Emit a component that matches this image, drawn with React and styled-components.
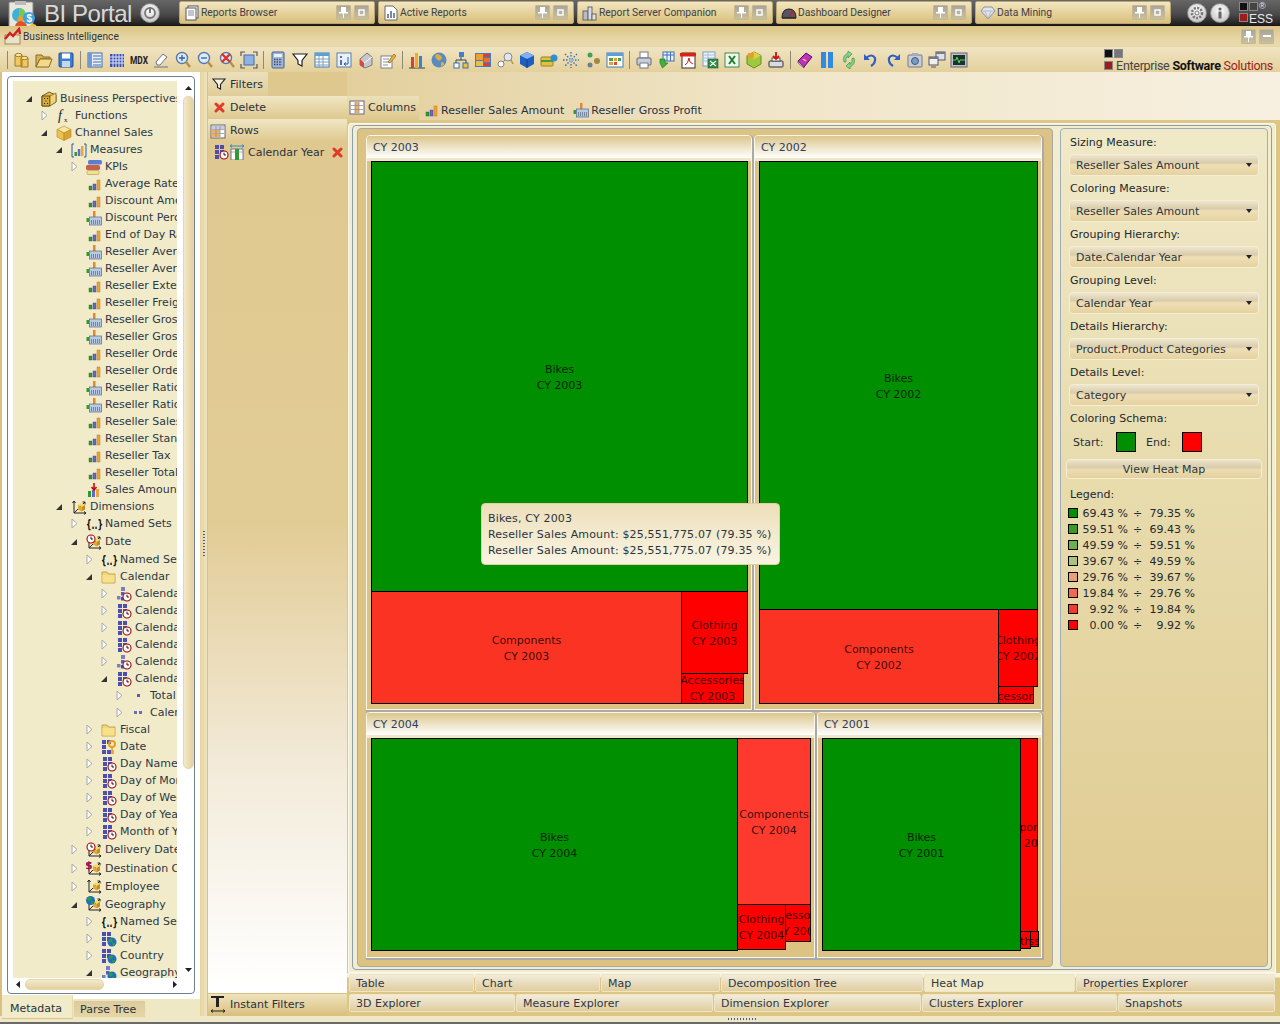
import React from "react";
import styled, { createGlobalStyle } from "styled-components";

const Global = createGlobalStyle`
  html, body { margin: 0; padding: 0; background: #3a3a3a; }
  * { box-sizing: border-box; }
`;

const UI = `"DejaVu Sans", Verdana, sans-serif`;
const NARROW = `Roboto, "Liberation Sans", sans-serif`;

const S = ({ children, w = 16, h = 16 }) => (
  <svg width={w} height={h} viewBox={`0 0 ${w} ${h}`} style={{ display: "block", flex: "none" }}>{children}</svg>
);

const Clock = ({ x = 9, y = 9, r = 4 }) => (
  <g>
    <circle cx={x} cy={y} r={r} fill="#fff" stroke="#a80000" strokeWidth="1.1" />
    <path d={`M${x} ${y - 2.4}V${y}H${x + 2}`} fill="none" stroke="#000" strokeWidth=".9" />
  </g>
);
const Sq = ({ x, y, s = 4, c = "#4a4fb0" }) => <rect x={x} y={y} width={s} height={s} fill={c} />;
const Globe = ({ x = 11, y = 11, r = 4.5 }) => (
  <g>
    <circle cx={x} cy={y} r={r} fill="#1f6fc0" />
    <path d={`M${x - 3} ${y - 3}q3 -1 4 1q-1 3 -4 2zM${x} ${y + 1}q3 -1 3 2l-2 1z`} fill="#2f9e2f" />
  </g>
);
const Axes = () => <path d="M3 2V14H15M3 2l-1.6 2M3 2l1.6 2M15 14l-2-1.5M15 14l-2 1.5M3 14L14 3M14 3h-2.5M14 3v2.5" fill="none" stroke="#222" strokeWidth="1" />;
const MiniCube = ({ x = 7, y = 4 }) => (
  <g transform={`translate(${x} ${y})`}>
    <path d="M0 2L3.5 0L7 2L3.5 4z" fill="#f6d868" />
    <path d="M0 2L3.5 4V8.5L0 6.5z" fill="#e5a92a" />
    <path d="M7 2L3.5 4V8.5L7 6.5z" fill="#c98c1a" />
  </g>
);
const Bars = () => (
  <g>
    <rect x="3" y="10" width="3" height="4" fill="#2f9a2f" stroke="#1d6b1d" strokeWidth=".4" />
    <rect x="7" y="8" width="3" height="6" fill="#6668c4" stroke="#3c3e90" strokeWidth=".4" />
    <rect x="11" y="4" width="3" height="10" fill="#eda63a" stroke="#b06c10" strokeWidth=".4" />
  </g>
);

const treeIcons = {
  cubeDots: (
    <S>
      <path d="M1 5L8 1L15 4V11L8 15H1z" fill="#e5bb52" stroke="#5b4410" strokeWidth=".8" />
      <path d="M1 5H9V15H1z" fill="#d9a93a" stroke="#4b3a10" strokeWidth=".8" />
      <path d="M9 5L15 2V11L9 15z" fill="#f1d37a" stroke="#5b4410" strokeWidth=".6" />
      <path d="M3 7h1v1H3zM6 7h1v1H6zM3 12h1v1H3zM6 12h1v1H6zM4.5 9.5h1v1h-1z" fill="#222" />
    </S>
  ),
  fx: (
    <S>
      <text x="2" y="12" fontFamily="Liberation Serif, serif" fontStyle="italic" fontSize="14" fill="#222">f</text>
      <text x="8" y="14" fontFamily="Liberation Serif, serif" fontSize="7" fill="#222">x</text>
    </S>
  ),
  cube: (
    <S>
      <path d="M1 4.5L8 1L15 4.5L8 8z" fill="#f8e69a" stroke="#b08a2a" strokeWidth=".6" />
      <path d="M1 4.5L8 8V15.5L1 12z" fill="#edc14d" stroke="#b08a2a" strokeWidth=".6" />
      <path d="M15 4.5L8 8V15.5L15 12z" fill="#d9a52e" stroke="#b08a2a" strokeWidth=".6" />
    </S>
  ),
  measures: (
    <S>
      <path d="M3 2H1V15H3M13 2h2V15H13" fill="none" stroke="#1f5fa8" strokeWidth="1" />
      <rect x="3.5" y="10" width="2.5" height="4" fill="#2f9a2f" />
      <rect x="6.8" y="7" width="2.5" height="7" fill="#6668c4" />
      <rect x="10" y="4" width="2.5" height="10" fill="#eda63a" />
    </S>
  ),
  kpi: (
    <S>
      <rect x="2" y="1" width="14" height="4.5" rx="1.5" fill="#5a7fd0" />
      <rect x="0" y="6" width="14" height="5" rx="1.5" fill="#c8604e" />
      <rect x="1" y="11.5" width="12" height="4" rx="1" fill="#f0e090" stroke="#b09a40" strokeWidth=".6" />
    </S>
  ),
  bars: <S><Bars /></S>,
  calc: (
    <S>
      <rect x="0.5" y="8" width="2.5" height="4" fill="#2f9a2f" />
      <rect x="7" y="1" width="2.5" height="7" fill="#e08a30" />
      <rect x="3.5" y="7" width="12" height="8" fill="#b9c9e2" stroke="#4f6a94" strokeWidth=".7" />
      <path d="M5 11h9M5 13h9" stroke="#33405a" strokeWidth="1" strokeDasharray="1 1" />
    </S>
  ),
  dims: <S><Axes /><MiniCube /></S>,
  braces: <S w={17}><text x="0" y="13" fontFamily="DejaVu Sans, sans-serif" fontWeight="700" fontSize="13" fill="#111" textLength="17" lengthAdjust="spacingAndGlyphs">{"{..}"}</text></S>,
  clockDim: <S><Axes /><MiniCube /><Clock x={5} y={5} /></S>,
  dollarDim: <S><Axes /><MiniCube /><text x="-1" y="9" fontFamily="DejaVu Sans, sans-serif" fontWeight="700" fontSize="11" fill="#a01050">$</text></S>,
  geoDim: <S><Axes /><MiniCube /><Globe x={4.5} y={4.5} /></S>,
  folder: (
    <S>
      <path d="M1 3H6L7.5 5H14V14H1z" fill="#f2d678" stroke="#b8963a" strokeWidth=".8" />
      <path d="M1.5 6H13.5V13.5H1.5z" fill="#f7e08c" />
    </S>
  ),
  hierClock: <S><Sq x={2} y={1} /><Sq x={7} y={1} /><Sq x={2} y={6} /><Sq x={7} y={6} /><Sq x={2} y={11} /><Clock x={11} y={11} /></S>,
  stepClock: <S><Sq x={5} y={1} c="#7a7cc8" /><Sq x={1} y={10} s={3.5} c="#7a7cc8" /><Sq x={5} y={6} s={3.5} c="#5a5cb8" /><Sq x={5} y={11} s={3.5} /><Clock x={11} y={11} /></S>,
  lvl1: <S><Sq x={6} y={6} s={3} c="#5a5cb8" /></S>,
  lvl2: <S><Sq x={3} y={6} s={3} c="#6a6cc0" /><Sq x={8} y={6} s={3} c="#6a6cc0" /></S>,
  keyGrid: (
    <S>
      <Sq x={1} y={1} /><Sq x={6} y={1} /><Sq x={1} y={6} /><Sq x={1} y={11} /><Sq x={6} y={11} />
      <circle cx="11" cy="5" r="3" fill="none" stroke="#e5a020" strokeWidth="2" />
      <path d="M11 8V15M11 12h2M11 14h2" stroke="#e5a020" strokeWidth="1.5" />
    </S>
  ),
  hierGeo: <S><Sq x={1} y={1} /><Sq x={6} y={1} /><Sq x={1} y={6} /><Sq x={6} y={6} /><Sq x={1} y={11} /><Globe /></S>,
  stepGeo: <S><Sq x={5} y={1} c="#7a7cc8" /><Sq x={1} y={10} s={3.5} c="#7a7cc8" /><Sq x={5} y={6} s={3.5} c="#5a5cb8" /><Globe /></S>,
  salesAmt: (
    <S>
      <rect x="2" y="9" width="3" height="6" fill="#2f9a2f" /><rect x="10" y="7" width="3" height="8" fill="#eda63a" /><rect x="6" y="8" width="3" height="7" fill="#6668c4" />
      <path d="M8 1V7M5.5 5L8 8L10.5 5" fill="none" stroke="#c01010" strokeWidth="1.6" />
    </S>
  ),
};

const tree = [
  [0, "o", "cubeDots", "Business Perspectives"], [1, "c", "fx", "Functions"], [1, "o", "cube", "Channel Sales"],
  [2, "o", "measures", "Measures"], [3, "c", "kpi", "KPIs"], [3, "", "bars", "Average Rate"], [3, "", "bars", "Discount Amount"],
  [3, "", "calc", "Discount Percentage"], [3, "", "bars", "End of Day Rate"], [3, "", "calc", "Reseller Average"], [3, "", "calc", "Reseller Average"],
  [3, "", "bars", "Reseller Extended"], [3, "", "bars", "Reseller Freight"], [3, "", "calc", "Reseller Gross"], [3, "", "calc", "Reseller Gross"],
  [3, "", "bars", "Reseller Order"], [3, "", "bars", "Reseller Order"], [3, "", "calc", "Reseller Ratio"], [3, "", "calc", "Reseller Ratio"],
  [3, "", "bars", "Reseller Sales"], [3, "", "bars", "Reseller Standard"], [3, "", "bars", "Reseller Tax"], [3, "", "bars", "Reseller Total"],
  [3, "", "salesAmt", "Sales Amount"], [2, "o", "dims", "Dimensions"], [3, "c", "braces", "Named Sets"], [3, "o", "clockDim", "Date", 19],
  [4, "c", "braces", "Named Sets"], [4, "o", "folder", "Calendar"], [5, "c", "stepClock", "Calendar"], [5, "c", "hierClock", "Calendar"],
  [5, "c", "hierClock", "Calendar"], [5, "c", "hierClock", "Calendar"], [5, "c", "stepClock", "Calendar"], [5, "o", "hierClock", "Calendar"],
  [6, "c", "lvl1", "Total"], [6, "c", "lvl2", "Calendar"], [4, "c", "folder", "Fiscal"], [4, "c", "keyGrid", "Date"],
  [4, "c", "hierClock", "Day Name"], [4, "c", "hierClock", "Day of Month"], [4, "c", "hierClock", "Day of Week"], [4, "c", "hierClock", "Day of Year"],
  [4, "c", "hierClock", "Month of Year"], [3, "c", "clockDim", "Delivery Date", 19], [3, "c", "dollarDim", "Destination Currency", 18],
  [3, "c", "dims", "Employee", 18], [3, "o", "geoDim", "Geography", 18], [4, "c", "braces", "Named Sets"], [4, "c", "hierGeo", "City"],
  [4, "c", "hierGeo", "Country"], [4, "o", "stepGeo", "Geography"],
];

const tb = {
  cyl: <S w={18} h={18}><path d="M2 4h7v11H2zM8 7h7v9H8z" fill="#f0c860" stroke="#a07a20" /><ellipse cx="5.5" cy="4" rx="3.5" ry="1.6" fill="#fbe9a0" stroke="#a07a20" /><ellipse cx="11.5" cy="7" rx="3.5" ry="1.6" fill="#fbe9a0" stroke="#a07a20" /></S>,
  open: <S w={18} h={18}><path d="M1 4h6l1 2h7v2H5l-4 8z" fill="#d9b060" stroke="#8a6a20" /><path d="M1 16L5 8H17L14 16z" fill="#f4d98a" stroke="#8a6a20" /></S>,
  save: <S w={18} h={18}><rect x="2" y="2" width="14" height="14" rx="1" fill="#3f7fd0" stroke="#1f4f98" /><rect x="5" y="2.5" width="8" height="5" fill="#fff" /><rect x="5" y="10" width="8" height="6" fill="#c7d7ea" /></S>,
  list: <S w={18} h={18}><rect x="2" y="2" width="14" height="14" fill="#eaf0fa" stroke="#3f6fae" /><path d="M2 2h4v14H2z" fill="#6f9ad8" /><path d="M7 5h8M7 8h8M7 11h8M7 14h8" stroke="#3f6fae" /></S>,
  grid: <S w={18} h={18}><rect x="2" y="3" width="14" height="13" fill="#3a4fb0" /><path d="M5 3v13M8 3v13M11 3v13M14 3v13M2 6h14M2 9h14M2 12h14" stroke="#dfe6fa" /></S>,
  mdx: <svg width="20" height="18" viewBox="0 0 20 18" style={{ display: "block" }}><text x="1" y="13" fontFamily="Roboto, sans-serif" fontWeight="700" fontSize="10" textLength="18" lengthAdjust="spacingAndGlyphs" fill="#222">MDX</text></svg>,
  erase: <S w={18} h={18}><path d="M4 11L11 3L15 6L8 14H5z" fill="#fff" stroke="#6b7488" /><path d="M2 16H16" stroke="#6b7488" /></S>,
  zin: <S w={18} h={18}><circle cx="8" cy="7" r="5.5" fill="#dcebfa" stroke="#5a7aa8" strokeWidth="1.4" /><path d="M12 11l4 5" stroke="#b89040" strokeWidth="2.4" /><path d="M5 7h6M8 4v6" stroke="#2f5f9f" strokeWidth="1.3" /></S>,
  zout: <S w={18} h={18}><circle cx="8" cy="7" r="5.5" fill="#dcebfa" stroke="#5a7aa8" strokeWidth="1.4" /><path d="M12 11l4 5" stroke="#b89040" strokeWidth="2.4" /><path d="M5 7h6" stroke="#2f5f9f" strokeWidth="1.3" /></S>,
  zx: <S w={18} h={18}><circle cx="8" cy="7" r="5.5" fill="#dcebfa" stroke="#5a7aa8" strokeWidth="1.4" /><path d="M12 11l4 5" stroke="#b89040" strokeWidth="2.4" /><path d="M4 3l8 8M12 3l-8 8" stroke="#e03020" strokeWidth="2.4" /></S>,
  fit: <S w={18} h={18}><rect x="4" y="4" width="10" height="10" fill="#8fb2e0" stroke="#3f6fae" /><path d="M1 5V1H5M13 1h4v4M17 13v4h-4M5 17H1v-4" fill="none" stroke="#556" strokeWidth="1.2" /></S>,
  calc: <S w={18} h={18}><rect x="3" y="1" width="12" height="16" rx="1" fill="#9fb6d8" stroke="#46608c" /><rect x="5" y="3" width="8" height="3" fill="#e8f0fa" /><path d="M5 8.5h8M5 11h8M5 13.5h8" stroke="#445" strokeWidth="1.3" strokeDasharray="1.4 1.2" /></S>,
  fil: <S w={18} h={18}><path d="M2 3H16L11 9.5V15L7 13V9.5z" fill="#fff" stroke="#222" strokeWidth="1.2" /></S>,
  table: <S w={18} h={18}><rect x="2" y="2" width="14" height="14" fill="#fff" stroke="#3f7fb8" /><path d="M2 2h14v3H2z" fill="#5f9fd8" /><path d="M6 5v11M10 5v11M2 8h14M2 11h14M2 14h14" stroke="#7f9fc0" /></S>,
  pivot: <S w={18} h={18}><rect x="2" y="2" width="14" height="14" fill="#e8f0fa" stroke="#5f7fa8" /><path d="M5 5h2v2H5z M5 9h2v5H5z" fill="#5a6fb0" /><path d="M13 6v7H9M9 13l2-1.5M9 13l2 1.5" fill="none" stroke="#2f5fa0" /></S>,
  paint: <S w={18} h={18}><path d="M3 8L10 2L15 6V14L8 17L3 14z" fill="#c5c7cc" stroke="#7a7a80" /><path d="M3 8L7 12V17L3 14z" fill="#d94a3a" /><path d="M7 12L15 6" stroke="#fff" /></S>,
  edit: <S w={18} h={18}><rect x="2" y="5" width="11" height="12" fill="#fff" stroke="#7a8090" /><path d="M4 8h6M4 11h7M4 14h5" stroke="#8a90a0" /><path d="M9 11L15 3L17 5L11 12z" fill="#e5b040" stroke="#8a6a20" strokeWidth=".7" /></S>,
  chart: <S w={18} h={18}><path d="M1 17H17" stroke="#345" /><rect x="3" y="6" width="3" height="11" fill="#d94030" /><rect x="7" y="2" width="3" height="15" fill="#e5b030" /><rect x="11" y="5" width="3" height="12" fill="#3f7fc8" /></S>,
  globe: <S w={18} h={18}><circle cx="9" cy="9" r="7.5" fill="#5a8ac0" /><path d="M6 3q5 0 6 4q-3 5-5 1q-3-1-1-5zM11 11q4 0 3 3l-3 2z" fill="#d9b040" /></S>,
  hier: <S w={18} h={18}><rect x="7" y="1" width="5" height="5" fill="#3f7fd0" /><rect x="2" y="12" width="5" height="5" fill="#fff" stroke="#3f6fae" /><rect x="11" y="12" width="5" height="5" fill="#f0c040" stroke="#3f6fae" /><path d="M9 6v3M4 12V9h10v3" fill="none" stroke="#345" /></S>,
  heat: <S w={18} h={18}><rect x="1" y="2" width="16" height="14" fill="#3f7fc8" /><rect x="2" y="3" width="7" height="6" fill="#f0a030" /><rect x="10" y="3" width="6" height="3" fill="#d94030" /><rect x="10" y="7" width="6" height="4" fill="#e87030" /><rect x="2" y="10" width="7" height="5" fill="#e5c050" /><rect x="10" y="12" width="6" height="3" fill="#d94030" /></S>,
  prop: <S w={18} h={18}><circle cx="5" cy="13" r="3" fill="#fff" stroke="#888" /><circle cx="12" cy="6" r="4" fill="#dfe8f0" stroke="#888" /><path d="M7 11l2-2" stroke="#888" /><path d="M15 9l2 4" stroke="#c09040" strokeWidth="1.6" /></S>,
  cube3: <S w={18} h={18}><path d="M9 1L16 4.5V13L9 17L2 13V4.5z" fill="#1f5fc0" /><path d="M2 4.5L9 8L16 4.5L9 1z" fill="#7fb0ef" /><path d="M9 8V17" stroke="#0f3f90" /></S>,
  cards: <S w={18} h={18}><rect x="1" y="6" width="12" height="9" rx="1" fill="#e5c040" stroke="#a08020" /><path d="M1 10h12" stroke="#3f9f3f" strokeWidth="2" /><circle cx="14" cy="7" r="3.5" fill="#2f8fd0" /></S>,
  snow: <S w={18} h={18}><path d="M9 1v16M1 9h16M3 3l12 12M15 3L3 15" stroke="#3f6fb0" strokeDasharray="1.5 1.5" strokeWidth="1.4" /><circle cx="9" cy="9" r="2" fill="#9fbfe0" /></S>,
  dots: <S w={18} h={18}><circle cx="6" cy="4" r="2.5" fill="#3f9f5f" /><circle cx="13" cy="10" r="3" fill="#a08a40" /><circle cx="6" cy="14" r="2.5" fill="#6f7f8f" /></S>,
  tiles: <S w={18} h={18}><rect x="1" y="2" width="16" height="14" fill="#fff" stroke="#3f7fb8" /><rect x="1" y="2" width="16" height="3" fill="#5f9fd8" /><rect x="3" y="7" width="4" height="3" fill="#4fa04f" /><rect x="8" y="7" width="3" height="3" fill="#e5a030" /><rect x="12" y="7" width="3" height="3" fill="#4fa04f" /><rect x="3" y="11" width="4" height="3" fill="#e5a030" /><rect x="8" y="11" width="3" height="3" fill="#d95030" /></S>,
  print: <S w={18} h={18}><rect x="5" y="1" width="8" height="6" fill="#fff" stroke="#778" /><rect x="2" y="7" width="14" height="7" rx="1" fill="#c8ced8" stroke="#667" /><rect x="5" y="12" width="8" height="5" fill="#fff" stroke="#778" /></S>,
  exportG: <S w={18} h={18}><rect x="6" y="1" width="11" height="9" fill="#eef" stroke="#3f6fb8" /><path d="M6 4h11M10 1v9M13.5 1v9" stroke="#3f6fb8" /><path d="M1 8h5v4h3l-5.500 5L1 12z" fill="#3fb03f" stroke="#1f7f1f" strokeWidth=".7" transform="translate(2 0)" /></S>,
  pdf: <S w={18} h={18}><rect x="3" y="2" width="13" height="15" fill="#fff" stroke="#333" /><rect x="1" y="2" width="16" height="3.500" fill="#e02010" /><path d="M6 14q3-1 4-7q0 5 4 6" fill="none" stroke="#c02010" /></S>,
  xls: <S w={18} h={18}><rect x="2" y="1" width="12" height="14" fill="#eef4fa" stroke="#7f9fc0" /><path d="M2 4h12M2 7h12M2 10h12M7 1v14" stroke="#9fbfdf" /><rect x="7" y="8" width="10" height="9" fill="#2f8f3f" stroke="#145" strokeWidth=".5" /><path d="M9 10l6 5M15 10l-6 5" stroke="#fff" strokeWidth="1.2" /></S>,
  x: <S w={18} h={18}><rect x="2" y="2" width="14" height="14" fill="#f0f7ef" stroke="#3f8f4f" /><path d="M6 5l6 8M12 5l-6 8" stroke="#1f7f2f" strokeWidth="2" /></S>,
  gcube: <S w={18} h={18}><path d="M9 1L16 4.5V13L9 17L2 13V4.500z" fill="#9fc83f" stroke="#5f8f1f" /><path d="M2 4.500L9 8L16 4.500L9 1z" fill="#e5d040" /><rect x="3" y="2" width="6" height="5" fill="#e5a030" /></S>,
  pdown: <S w={18} h={18}><rect x="2" y="10" width="14" height="6" rx="1" fill="#d8dce2" stroke="#333" /><rect x="5" y="7" width="8" height="3" fill="#fff" stroke="#555" /><path d="M9 1V8M6 5l3 3 3-3" fill="none" stroke="#d01010" strokeWidth="1.8" /></S>,
  book: <S w={18} h={18}><path d="M2 10L10 2L16 6L8 16z" fill="#c030c0" stroke="#501050" /><path d="M2 10L8 16V17L2 12z" fill="#e8d0e8" stroke="#501050" strokeWidth=".6" /><path d="M7 8l3 2" stroke="#ffd040" strokeWidth="1.4" /></S>,
  pause: <S w={18} h={18}><rect x="3" y="1" width="5" height="16" fill="#2f8ae0" /><rect x="10" y="1" width="5" height="16" fill="#2f8ae0" /></S>,
  cycle: <S w={18} h={18}><path d="M4 11Q2 5 8 2V0l4 3-4 4V4.500Q5 7 6 11zM14 7q2 6-4 9v2l-4-3 4-4v2.500q3-2 2-6z" fill="#8fd08f" stroke="#3f9f4f" strokeWidth=".8" /></S>,
  undo: <S w={18} h={18}><path d="M4 7q6-5 9 0q1 5-4 8" fill="none" stroke="#2f5fc0" strokeWidth="2.200" /><path d="M2 3V9H8z" fill="#2f5fc0" /></S>,
  redo: <S w={18} h={18}><path d="M14 7q-6-5-9 0q-1 5 4 8" fill="none" stroke="#2f5fc0" strokeWidth="2.200" /><path d="M16 3V9H10z" fill="#2f5fc0" /></S>,
  cam: <S w={18} h={18}><rect x="2" y="4" width="14" height="12" rx="1" fill="#c8ced8" stroke="#778" /><rect x="6" y="2" width="6" height="3" fill="#aab" /><circle cx="9" cy="10" r="3.500" fill="#6f9fd0" stroke="#556" /></S>,
  win: <S w={18} h={18}><rect x="8" y="1" width="9" height="8" fill="#dde2ea" stroke="#556" /><rect x="1" y="6" width="9" height="8" fill="#eef0f4" stroke="#556" /><rect x="1" y="6" width="9" height="2" fill="#778" /><rect x="8" y="1" width="9" height="2" fill="#778" /><path d="M3 16h5" stroke="#556" /></S>,
  mon: <S w={18} h={18}><rect x="1" y="2" width="16" height="14" fill="#bcc2c8" stroke="#667" /><rect x="3" y="4" width="12" height="10" fill="#20302a" /><path d="M3 9h3l1-3 2 6 1-3h5" fill="none" stroke="#40e060" /></S>,
};

const toolbarGroups = [
  ["cyl", "open", "save"],
  ["list", "grid", "mdx", "erase", "zin", "zout", "zx", "fit"],
  ["calc", "fil", "table", "pivot", "paint", "edit"],
  ["chart", "globe", "hier", "heat", "prop", "cube3", "cards", "snow", "dots", "tiles"],
  ["print", "exportG", "pdf", "xls", "x", "gcube", "pdown"],
  ["book", "pause", "cycle", "undo", "redo", "cam", "win", "mon"],
];

const tabIcons = {
  reports: <S><rect x="4" y="1" width="10" height="12" fill="#fff" stroke="#556" /><rect x="2" y="3" width="10" height="12" fill="#fff" stroke="#556" /><path d="M4 6h6M4 8h6M4 10h6" stroke="#889" /></S>,
  active: <S><path d="M2 1H10L14 5V15H2z" fill="#fff" stroke="#667" /><path d="M5 13V9M8 13V6M11 13V8" stroke="#7a8a9a" strokeWidth="2" /></S>,
  comp: <S><rect x="1" y="6" width="5" height="9" fill="#b8bcc4" stroke="#667" /><rect x="6" y="2" width="4" height="13" fill="#d8dce2" stroke="#667" /><rect x="10" y="9" width="4" height="6" fill="#e8e4d0" stroke="#667" /></S>,
  dash: <S><path d="M1 13Q1 4 8 4Q15 4 15 13z" fill="#556" stroke="#222" /><path d="M8 12L12 6" stroke="#c02020" strokeWidth="1.4" /><path d="M1 13h14" stroke="#222" /></S>,
  gem: <S><path d="M1 6L4 2H12L15 6L8 14z" fill="#dfe4ec" stroke="#8a94a4" /><path d="M1 6H15M5 6L8 14L11 6" stroke="#a4adba" fill="none" strokeWidth=".7" /></S>,
};

const App0 = styled.div`
  width: 1280px;
  height: 1024px;
  display: flex;
  flex-direction: column;
  overflow: hidden;
  font-family: ${UI};
  font-size: 11px;
  color: #28323e;
  background: #e0ca90;
`;

const TopBar = styled.header`
  height: 26px;
  flex: none;
  display: flex;
  align-items: flex-start;
  background: linear-gradient(#666 0, #4a4a4a 55%, #1e1e1e 95%, #111 100%);
  padding-top: 1px;
`;
const LogoBox = styled.div`
  width: 38px;
  height: 25px;
  margin-left: 5px;
  overflow: hidden;
  flex: none;
`;
const Brand = styled.div`
  font-family: "Liberation Sans", sans-serif;
  font-size: 24px;
  line-height: 25px;
  width: 96px;
  margin-left: 1px;
  color: #d8d8d8;
  letter-spacing: -0.45px;
  white-space: nowrap;
  flex: none;
`;
const RoundBtn = styled.div`
  width: 20px;
  height: 20px;
  margin-top: 2px;
  border-radius: 50%;
  background: radial-gradient(circle at 50% 35%, #fff, #b8b8b8);
  border: 1px solid #8a8a8a;
  display: flex;
  align-items: center;
  justify-content: center;
  flex: none;
`;
const TabsStrip = styled.nav`
  display: flex;
  gap: 3px;
  margin-left: 19px;
  flex: none;
`;
const TopTab = styled.div`
  width: 196px;
  height: 23px;
  display: flex;
  align-items: center;
  padding: 0 5px 0 4px;
  border: 1px solid #b9a571;
  border-radius: 2px;
  background: linear-gradient(#f3e7c3, #e8d6a3 40%, #d9bf7c);
  font-family: ${NARROW};
  font-size: 10.3px;
  color: #3a3f48;
  white-space: nowrap;
`;
const TabLabel = styled.span`
  flex: 1;
  margin-left: 1px;
`;
const PinBtn = styled.div`
  width: 15px;
  height: 15px;
  margin-left: 3px;
  display: flex;
  align-items: center;
  justify-content: center;
  background: linear-gradient(#a9a59a, #c9bf9f);
  border: 1px solid #c7b98f;
  border-radius: 1px;
  flex: none;
`;
const PinIcon = () => <svg width="9" height="11" viewBox="0 0 9 11"><path d="M2 0H7V5H9V6.500H5V11H4V6.500H0V5H2z" fill="#fff" /></svg>;
const BoxIcon = () => <svg width="7" height="7" viewBox="0 0 7 7"><rect x="1" y="1" width="5" height="5" fill="none" stroke="#fff" strokeWidth="1.4" /></svg>;
const MinIcon = () => <svg width="8" height="4" viewBox="0 0 8 4"><rect y="1" width="8" height="2" fill="#fff" /></svg>;

const TopRight = styled.div`
  display: flex;
  gap: 3px;
  margin-left: 16px;
  align-items: flex-start;
`;
const EssBox = styled.div`
  width: 38px;
  margin-left: 6px;
  margin-top: 1px;
  display: grid;
  grid-template-columns: 9px 9px 1fr;
  grid-template-rows: 10px 13px;
  gap: 1px;
  font-family: "Liberation Sans", sans-serif;
  color: #e8e8e8;
`;
const Tick = styled.i`
  display: block;
  width: 9px;
  height: 9px;
  flex: none;
  background: ${(p) => p.$c};
  border: 1px solid #888;
`;
const EssText = styled.span`
  grid-column: 2 / 4;
  font-size: 12px;
  line-height: 13px;
`;
const Reg = styled.span`
  font-size: 9px;
  line-height: 9px;
`;

const TitleBar = styled.div`
  height: 21px;
  flex: none;
  display: flex;
  align-items: center;
  padding: 0 6px 0 4px;
  background: linear-gradient(#dcc484, #e6d6a6 60%, #ead9aa);
  border-bottom: 1px solid #e6d7ab;
  font-family: ${NARROW};
  font-size: 10.2px;
  color: #30343c;
`;
const TitleText = styled.span`
  flex: 1;
  margin-left: 1px;
`;
const Toolbar = styled.div`
  height: 25px;
  flex: none;
  display: flex;
  align-items: center;
  padding-left: 4px;
  background: linear-gradient(#f0e4c2, #e3d09c);
`;
const Sep = styled.i`
  width: 1px;
  height: 18px;
  background: #8f8a78;
  margin: 0 3px;
  flex: none;
`;
const Slot = styled.div`
  width: 22px;
  display: flex;
  justify-content: center;
  flex: none;
`;
const Vendor = styled.div`
  margin-left: auto;
  margin-right: 7px;
  height: 25px;
  padding-top: 2px;
  display: flex;
  flex-direction: column;
  gap: 2px;
  font-family: ${NARROW};
  font-size: 12.5px;
  letter-spacing: -0.3px;
  color: #444;
`;
const VendorTop = styled.div`
  display: flex;
  gap: 1px;
`;
const VendorLine = styled.div`
  display: flex;
  align-items: center;
  gap: 3px;
  line-height: 11px;
  white-space: nowrap;
`;
const VendorWord = styled.b`
  color: #111;
`;
const VendorRed = styled.span`
  color: #9e1c1c;
`;

const Body = styled.div`
  flex: 1;
  min-height: 0;
  display: flex;
`;

const LeftPane = styled.aside`
  width: 200px;
  flex: none;
  display: flex;
  flex-direction: column;
  background: #fff;
  border-left: 2px solid #d9c080;
`;
const TreeFrame = styled.div`
  flex: 1;
  min-height: 0;
  margin: 4px 5px 5px 5px;
  border: 1px solid #6f7f90;
  border-radius: 4px;
  background: #fff;
  display: grid;
  grid-template-columns: 164px 1fr;
  grid-template-rows: 1fr 15px;
  padding: 4px 0 0 5px;
`;
const Tree = styled.div`
  background: #f1ebc9;
  overflow: hidden;
  padding-top: 9px;
`;
const Row = styled.div`
  height: ${(p) => p.$h}px;
  display: flex;
  align-items: center;
  padding-left: ${(p) => 12 + p.$l * 15}px;
  white-space: nowrap;
  color: #2e3844;
`;
const Arrow = styled.span`
  width: 16px;
  flex: none;
  display: flex;
`;
const IconBox = styled.span`
  width: 16px;
  margin-right: 3px;
  flex: none;
  display: flex;
  justify-content: center;
`;
const VScroll = styled.div`
  padding: 4px 2px 0 6px;
  display: flex;
  flex-direction: column;
  align-items: center;
`;
const VThumb = styled.div`
  width: 11px;
  height: 673px;
  flex: none;
  margin-top: 5px;
  border: 1px solid #e6d8ae;
  border-radius: 5px;
  background: linear-gradient(90deg, #f3e9cc, #e4d09c);
`;
const ScrollEnd = styled.span`
  margin-top: auto;
  margin-bottom: 2px;
`;
const HScroll = styled.div`
  grid-column: 1 / 3;
  display: flex;
  align-items: center;
  padding: 0 18px 2px 2px;
`;
const HThumb = styled.div`
  width: 79px;
  height: 11px;
  margin-left: 4px;
  margin-right: auto;
  border: 1px solid #e6d8ae;
  border-radius: 5px;
  background: linear-gradient(#f3e9cc, #e4d09c);
`;
const LeftTabs = styled.div`
  height: 17px;
  flex: none;
  display: flex;
  align-items: flex-start;
  background: #efe8c4;
  position: relative;
  z-index: 1;
`;
const MetaTab = styled.div`
  width: 71px;
  height: 24px;
  margin-top: -4px;
  padding-left: 8px;
  line-height: 28px;
  background: #f1ebc9;
  border-bottom: 1px solid #d9c58f;
  border-right: 1px solid #e8dcae;
`;
const ParseTab = styled.div`
  width: 73px;
  height: 18px;
  margin-top: 1px;
  padding-left: 6px;
  line-height: 18px;
  background: linear-gradient(#dccb9c, #e6d6a6);
  border: 1px solid #efe4bc;
`;

const Splitter = styled.div`
  width: 7px;
  flex: none;
  display: flex;
  align-items: center;
  justify-content: center;
  background: linear-gradient(90deg, #e6d4a0, #efe3bf);
`;
const Grip = styled.i`
  display: block;
  width: ${(p) => (p.$h ? "30px" : "2px")};
  height: ${(p) => (p.$h ? "2px" : "27px")};
  background: ${(p) => (p.$h
    ? "repeating-linear-gradient(90deg,#4a5a80 0 1px,transparent 1px 3px)"
    : "repeating-linear-gradient(#4a5a80 0 1px,transparent 1px 3px)")};
`;

const MidPane = styled.section`
  width: 140px;
  flex: none;
  display: flex;
  flex-direction: column;
  border-left: 1px solid #c9c2a8;
  background: linear-gradient(#dfc88e 0, #e2cc96 48%, #f3ebda 74%, #fff 97%);
`;
const FilterTab = styled.div`
  width: 60px;
  height: 24px;
  flex: none;
  display: flex;
  align-items: center;
  gap: 4px;
  padding-left: 4px;
  background: linear-gradient(#ece0bc, #e0cc98);
`;
const SideBtn = styled.div`
  height: 23px;
  flex: none;
  display: flex;
  align-items: center;
  gap: ${(p) => p.$gap}px;
  padding-left: ${(p) => p.$pl}px;
  background: linear-gradient(#f0e7c4, #dfc88e);
`;
const DropItem = styled.div`
  height: 20px;
  flex: none;
  display: flex;
  align-items: center;
  padding: 0 4px 0 5px;
  white-space: nowrap;
`;
const DropLabel = styled.span`
  flex: 1;
  margin-left: 3px;
`;
const InstantBar = styled.div`
  height: 23px;
  margin-top: auto;
  flex: none;
  display: flex;
  align-items: center;
  gap: 4px;
  padding: 0 0 2px 2px;
  border-top: 1px solid #d9c07f;
  background: linear-gradient(#efe3bd, #d9bf7e);
`;

const RightPane = styled.main`
  flex: 1;
  min-width: 0;
  display: flex;
  flex-direction: column;
  background: #dcc585;
`;
const ColumnsStrip = styled.div`
  height: 48px;
  flex: none;
  display: flex;
  align-items: flex-end;
  background: linear-gradient(90deg, #e3cf9c, #f0e5c8 45%, #f7f0e0);
`;
const ColumnsTab = styled.div`
  width: 72px;
  height: 24px;
  margin-right: 4px;
  flex: none;
  display: flex;
  align-items: center;
  gap: 3px;
  padding: 0 0 2px 2px;
  background: linear-gradient(#ece0b8, #dfc88e);
`;
const FieldChip = styled.div`
  height: 20px;
  margin-right: 9px;
  display: flex;
  align-items: center;
  gap: 2px;
  white-space: nowrap;
`;
const Frame = styled.div`
  flex: 1;
  min-height: 0;
  margin: 3px 4px 0 1px;
  padding: 1px 3px 2px;
  background: #f3edd0;
  border: 1px solid #fbf8ec;
  border-radius: 3px 3px 0 0;
`;
const Outline = styled.div`
  height: 100%;
  padding: 2px 3px 2px 4px;
  border: 1px solid #8d9db0;
  border-radius: 4px;
  display: flex;
  gap: 7px;
`;
const HeatPanel = styled.div`
  width: 696px;
  flex: none;
  position: relative;
  padding: 6px 8px 7px;
  background: #dcc383;
  border: 1px solid #a8a8a4;
  border-radius: 4px;
  display: grid;
  grid-template-rows: 575px 246px;
  row-gap: 2px;
`;
const GroupRow = styled.div`
  display: grid;
  grid-template-columns: ${(p) => p.$cols};
  column-gap: 2px;
`;
const Group = styled.div`
  display: flex;
  flex-direction: column;
  border: 1px solid #fbf7e8;
  border-radius: 4px 4px 0 0;
  box-shadow: 1px 1px 0 1px #aaa;
  background: #dcc383;
`;
const GroupHead = styled.div`
  height: 22px;
  flex: none;
  padding: 5px 0 0 6px;
  line-height: 14px;
  color: #2c3d63;
  background: linear-gradient(#dcc68c, #ffffff);
  border-radius: 3px 3px 0 0;
`;
const GroupBand = styled.div`
  height: 3px;
  flex: none;
  background: #f0e8c8;
`;
const Plot = styled.div`
  flex: 1;
  position: relative;
  margin: 0 3px 5px 4px;
`;
const Tile = styled.div`
  position: absolute;
  border: 1px solid #000;
  background: ${(p) => p.$c};
  overflow: hidden;
  padding-top: ${(p) => (p.$tight ? 0 : 2)}px;
  display: flex;
  flex-direction: column;
  align-items: center;
  justify-content: ${(p) => (p.$tight ? "center" : "safe center")};
  line-height: 16px;
  white-space: nowrap;
  color: rgba(0, 0, 0, 0.78);
`;
const Tooltip = styled.div`
  position: absolute;
  left: 123px;
  top: 374px;
  width: 299px;
  height: 62px;
  padding: 7px 6px;
  line-height: 16px;
  letter-spacing: 0.17px;
  white-space: nowrap;
  background: linear-gradient(#eddfba, #f9f4e2);
  border: 1px solid #e0cf9f;
  border-radius: 4px;
  color: #2a3440;
`;
const Config = styled.aside`
  flex: 1;
  min-width: 0;
  padding: 1px 8px 0;
  border: 1px solid #a0adba;
  border-radius: 4px;
  background: linear-gradient(#f0e9c8, #e8dcae 40%, #dfc98f);
`;
const CLabel = styled.div`
  height: 24px;
  line-height: 26px;
  padding-left: 1px;
  color: #24282e;
`;
const Select = styled.div`
  height: 22px;
  display: flex;
  align-items: center;
  justify-content: space-between;
  padding: 0 6px;
  border: 1px solid #f5edd4;
  border-radius: 4px;
  background: linear-gradient(#eee6cf 0, #d9ccaa 38%, #efdfb6 50%, #e5d2a0 100%);
  color: #2c3642;
`;
const Caret = styled.i`
  width: 0;
  height: 0;
  border-left: 3.5px solid transparent;
  border-right: 3.5px solid transparent;
  border-top: 4px solid #1f2530;
`;
const SwatchRow = styled.div`
  height: 20px;
  margin-top: 2px;
  padding-left: 4px;
  display: flex;
  align-items: center;
`;
const SwatchLabel = styled.span`
  width: ${(p) => p.$w}px;
  flex: none;
`;
const Swatch = styled.i`
  width: 20px;
  height: 20px;
  flex: none;
  margin-right: 10px;
  background: ${(p) => p.$c};
  border: 1px solid #000;
`;
const ViewBtn = styled.div`
  height: 20px;
  margin: 7px -3px 0;
  text-align: center;
  line-height: 19px;
  border: 1px solid #f5edd4;
  border-radius: 4px;
  background: linear-gradient(#ece3cb 0, #d9ccaa 40%, #ecdcb2 55%, #e3d09c 100%);
  color: #2c3642;
`;
const LegendTitle = styled.div`
  margin: 7px 0 1px;
  height: 18px;
  line-height: 18px;
  padding-left: 1px;
  color: #24282e;
`;
const LegendRow = styled.div`
  height: 16px;
  margin-left: -1px;
  display: flex;
  align-items: center;
  color: #24282e;
  white-space: nowrap;
`;
const LegendDot = styled.i`
  width: 10px;
  height: 10px;
  margin-right: 2px;
  flex: none;
  background: ${(p) => p.$c};
  border: 1px solid #000;
`;
const LegendNum = styled.span`
  width: 48px;
  text-align: right;
  flex: none;
`;
const LegendSep = styled.span`
  width: 19px;
  text-align: center;
  flex: none;
`;

const ViewTabs = styled.div`
  height: 43px;
  flex: none;
  padding: 1px 5px 0 2px;
  display: flex;
  flex-direction: column;
  gap: 2px;
  background: linear-gradient(#f8f3e0 0, #f8f3e0 4px, #dcc585 5px);
`;
const ViewRow = styled.div`
  display: flex;
  gap: 1px;
  height: 18px;
`;
const ViewTab = styled.div`
  width: ${(p) => p.$w}px;
  flex: none;
  padding-left: 6px;
  line-height: 18px;
  border: 1px solid #efe6c6;
  border-radius: 2px;
  color: #2e3844;
  background: ${(p) => (p.$on ? "#f1ebc9" : "linear-gradient(#f4ecd8, #e8dcc0 50%, #e2cc98)")};
`;
const BottomStrip = styled.footer`
  height: 8px;
  flex: none;
  display: flex;
  justify-content: center;
  padding: 2px 0 0 205px;
  background: #efe8c8;
  border-bottom: 2px solid #6a6a68;
`;

const Tri = ({ t }) =>
  t === "o" ? (
    <svg width="9" height="9" viewBox="0 0 9 9"><path d="M7 2V8H1z" fill="#333" /></svg>
  ) : t === "c" ? (
    <svg width="9" height="11" viewBox="0 0 9 11"><path d="M2 1L7 5.500L2 10z" fill="#fff" stroke="#a8a8a8" /></svg>
  ) : null;

const Xmark = () => (
  <svg width="11" height="11" viewBox="0 0 11 11"><path d="M2 2L9 9M9 2L2 9" stroke="#e23a28" strokeWidth="3" strokeLinecap="round" /></svg>
);
const FunnelSmall = () => (
  <svg width="14" height="14" viewBox="0 0 14 14"><path d="M1 2H13L8.500 7.500V12L5.500 10.500V7.500z" fill="#f7f3e0" stroke="#222" strokeWidth="1.100" /></svg>
);
const OrangeGrid = () => (
  <S>
    <rect x="1" y="2" width="14" height="13" fill="#fff" stroke="#667" />
    <rect x="2" y="3" width="12" height="3" fill="#c5cedc" />
    <rect x="2" y="7" width="8" height="3" fill="#f0b060" /><rect x="2" y="11" width="8" height="3" fill="#f0b060" />
    <path d="M6 3v11M10 3v11M2 6.500h12M2 10.500h12" stroke="#889" strokeWidth=".7" />
  </S>
);
const ColGrid = () => (
  <S>
    <rect x="1" y="2" width="14" height="13" fill="#fff" stroke="#667" />
    <rect x="6" y="3" width="4" height="11" fill="#f0b060" />
    <path d="M6 3v11M10 3v11M2 6.500h12M2 10.500h12" stroke="#889" strokeWidth=".7" />
  </S>
);
const ColYear = () => (
  <S>
    <path d="M1 2h14M1 2l2-1.500M1 2l2 1.500M15 2l-2-1.500M15 2l-2 1.500" fill="none" stroke="#2f8ad0" />
    <rect x="2" y="5" width="12" height="11" fill="#fff" stroke="#778" />
    <rect x="6" y="5" width="4" height="11" fill="#2f9a2f" />
    <path d="M2 8h12" stroke="#778" strokeWidth=".6" />
  </S>
);
const TitleLogo = () => (
  <S w={18} h={18}>
    <rect x="1" y="8" width="15" height="9" fill="#e9e2c8" stroke="#a08a5a" />
    <path d="M1 12L6 6L9 9L15 2L16 7" fill="none" stroke="#d02020" strokeWidth="2.400" />
  </S>
);
const InstantIcon = () => (
  <S w={16} h={18}>
    <path d="M1 1H14V3H9V12H6V3H1z" fill="#222" />
    <path d="M1 16h14M1 16l2-1.500M1 16l2 1.500M15 16l-2-1.500M15 16l-2 1.500" fill="none" stroke="#222" />
  </S>
);
const BarsIcon = () => <S><Bars /></S>;
const BigLogo = () => (
  <svg width="38" height="32" viewBox="0 0 38 32" style={{ display: "block" }}>
    <rect x="4" y="1" width="24" height="30" rx="1" fill="#e8e8e0" stroke="#888" />
    <rect x="10" y="0" width="11" height="4" fill="#bbb" />
    <circle cx="14" cy="14" r="7" fill="#3fb0d8" />
    <path d="M14 14V7a7 7 0 0 1 6 10z" fill="#7ac84a" />
    <path d="M14 14l6 3a7 7 0 0 1-8 4z" fill="#e8a030" />
    <circle cx="24" cy="17" r="6" fill="#3f9fe0" />
    <text x="21.500" y="21" fontFamily="Liberation Sans, sans-serif" fontWeight="700" fontSize="10" fill="#fff">$</text>
    <circle cx="16" cy="26" r="6" fill="#e0522a" />
    <circle cx="28" cy="27" r="4" fill="#f0c030" />
  </svg>
);
const Power = () => (
  <svg width="14" height="14" viewBox="0 0 14 14"><circle cx="7" cy="7" r="5" fill="none" stroke="#777" strokeWidth="1.800" /><path d="M7 1V7" stroke="#777" strokeWidth="2" /></svg>
);
const Gear = () => (
  <svg width="16" height="16" viewBox="0 0 16 16"><circle cx="8" cy="8" r="5" fill="none" stroke="#777" strokeWidth="2.600" strokeDasharray="2 1.300" /><circle cx="8" cy="8" r="2" fill="none" stroke="#777" /></svg>
);
const InfoI = () => (
  <svg width="14" height="14" viewBox="0 0 14 14"><circle cx="7" cy="3" r="1.600" fill="#666" /><rect x="5.500" y="5.500" width="3" height="7" fill="#666" /></svg>
);

const G = "#008f00", R1 = "#fa3323", R2 = "#ff0000", R3 = "#fe3a2e";
const groups = [
  [
    "386px 288px",
    ["CY 2003", [
      ["Bikes", 0, 0, 377, 431, G], ["Components", 0, 430, 311, 113, R1], ["Clothing", 310, 430, 67, 83, R2], ["Accessories", 310, 512, 63, 31, R2, true],
    ]],
    ["CY 2002", [
      ["Bikes", 0, 0, 279, 449, G], ["Components", 0, 448, 240, 95, R1], ["Clothing", 239, 448, 40, 78, R2], ["Accessories", 239, 525, 36, 18, R2],
    ]],
  ],
  [
    "449px 225px",
    ["CY 2004", [
      ["Bikes", 0, 0, 367, 213, G], ["Components", 366, 0, 74, 167, R3], ["Clothing", 366, 166, 49, 46, R2], ["Accessories", 414, 166, 26, 38, R2],
    ]],
    ["CY 2001", [
      ["Bikes", 0, 0, 199, 213, G], ["Components", 198, 0, 18, 194, R2], ["Clothing", 198, 193, 11, 18, R2], ["Accessories", 208, 193, 9, 16, R2],
    ]],
  ],
];

const configRows = [
  ["Sizing Measure:", "Reseller Sales Amount"],
  ["Coloring Measure:", "Reseller Sales Amount"],
  ["Grouping Hierarchy:", "Date.Calendar Year"],
  ["Grouping Level:", "Calendar Year"],
  ["Details Hierarchy:", "Product.Product Categories"],
  ["Details Level:", "Category"],
];
const legend = [
  ["#008f00", "69.43 %", "79.35 %"], ["#3c9a24", "59.51 %", "69.43 %"], ["#6fae4c", "49.59 %", "59.51 %"], ["#a9c27c", "39.67 %", "49.59 %"],
  ["#e8a07a", "29.76 %", "39.67 %"], ["#ef6a50", "19.84 %", "29.76 %"], ["#f53a2c", "9.92 %", "19.84 %"], ["#ff0000", "0.00 %", "9.92 %"],
];
const viewRows = [
  [["Table", 125], ["Chart", 125], ["Map", 119], ["Decomposition Tree", 202], ["Heat Map", 151, true], ["Properties Explorer", 199]],
  [["3D Explorer", 166], ["Measure Explorer", 197], ["Dimension Explorer", 207], ["Clusters Explorer", 195], ["Snapshots", 157]],
];
const topTabs = [
  ["reports", "Reports Browser"], ["active", "Active Reports"], ["comp", "Report Server Companion"], ["dash", "Dashboard Designer"], ["gem", "Data Mining"],
];

export default function App() {
  return (
    <App0>
      <Global />
      <TopBar>
        <LogoBox><BigLogo /></LogoBox>
        <Brand>BI Portal</Brand>
        <RoundBtn><Power /></RoundBtn>
        <TabsStrip>
          {topTabs.map(([ic, t]) => (
            <TopTab key={t}>
              {tabIcons[ic]}
              <TabLabel>{t}</TabLabel>
              <PinBtn><PinIcon /></PinBtn>
              <PinBtn><BoxIcon /></PinBtn>
            </TopTab>
          ))}
        </TabsStrip>
        <TopRight>
          <RoundBtn><Gear /></RoundBtn>
          <RoundBtn><InfoI /></RoundBtn>
          <EssBox>
            <Tick $c="#111" /><Tick $c="#444" /><Reg>®</Reg>
            <Tick $c="#9e1c1c" /><EssText>ESS</EssText>
          </EssBox>
        </TopRight>
      </TopBar>

      <TitleBar>
        <TitleLogo />
        <TitleText>Business Intelligence</TitleText>
        <PinBtn><PinIcon /></PinBtn>
        <PinBtn><MinIcon /></PinBtn>
      </TitleBar>

      <Toolbar>
        {toolbarGroups.map((g, i) => (
          <React.Fragment key={i}>
            <Sep />
            {g.map((k) => <Slot key={k}>{tb[k]}</Slot>)}
          </React.Fragment>
        ))}
        <Vendor>
          <VendorTop><Tick $c="#111" /><Tick $c="#777" /></VendorTop>
          <VendorLine>
            <Tick $c="#9e1c1c" />
            <span>Enterprise</span><VendorWord>Software</VendorWord><VendorRed>Solutions</VendorRed>
          </VendorLine>
        </Vendor>
      </Toolbar>

      <Body>
        <LeftPane>
          <TreeFrame>
            <Tree>
              {tree.map(([l, t, ic, text, h], i) => (
                <Row key={i} $l={l} $h={h || 17}>
                  <Arrow><Tri t={t} /></Arrow>
                  <IconBox>{treeIcons[ic]}</IconBox>
                  {text}
                </Row>
              ))}
            </Tree>
            <VScroll>
              <svg width="9" height="6" viewBox="0 0 9 6"><path d="M1 5H8L4.500 1z" fill="#222" /></svg>
              <VThumb />
              <ScrollEnd><svg width="9" height="6" viewBox="0 0 9 6"><path d="M1 1H8L4.500 5z" fill="#222" /></svg></ScrollEnd>
            </VScroll>
            <HScroll>
              <svg width="6" height="9" viewBox="0 0 6 9"><path d="M5 1V8L1 4.500z" fill="#222" /></svg>
              <HThumb />
              <svg width="6" height="9" viewBox="0 0 6 9"><path d="M1 1V8L5 4.500z" fill="#222" /></svg>
            </HScroll>
          </TreeFrame>
          <LeftTabs>
            <MetaTab>Metadata</MetaTab>
            <ParseTab>Parse Tree</ParseTab>
          </LeftTabs>
        </LeftPane>

        <Splitter><Grip /></Splitter>

        <MidPane>
          <FilterTab><FunnelSmall />Filters</FilterTab>
          <SideBtn $pl={6} $gap={5}><Xmark />Delete</SideBtn>
          <SideBtn $pl={2} $gap={4}><OrangeGrid />Rows</SideBtn>
          <DropItem>
            {treeIcons.hierClock}
            <ColYear />
            <DropLabel>Calendar Year</DropLabel>
            <Xmark />
          </DropItem>
          <InstantBar><InstantIcon />Instant Filters</InstantBar>
        </MidPane>

        <RightPane>
          <ColumnsStrip>
            <ColumnsTab><ColGrid />Columns</ColumnsTab>
            <FieldChip><BarsIcon />Reseller Sales Amount</FieldChip>
            <FieldChip>{treeIcons.calc}Reseller Gross Profit</FieldChip>
          </ColumnsStrip>
          <Frame>
            <Outline>
              <HeatPanel>
                {groups.map(([cols, ...gs], r) => (
                  <GroupRow key={r} $cols={cols}>
                    {gs.map(([name, tiles]) => (
                      <Group key={name}>
                        <GroupHead>{name}</GroupHead>
                        <GroupBand />
                        <Plot>
                          {tiles.map(([label, x, y, w, h, c, tight]) => (
                            <Tile key={label} $c={c} $tight={tight} style={{ left: x, top: y, width: w, height: h }}>
                              <span>{label}</span>
                              <span>{name}</span>
                            </Tile>
                          ))}
                        </Plot>
                      </Group>
                    ))}
                  </GroupRow>
                ))}
                <Tooltip>
                  Bikes, CY 2003<br />
                  Reseller Sales Amount: $25,551,775.07 (79.35 %)<br />
                  Reseller Sales Amount: $25,551,775.07 (79.35 %)
                </Tooltip>
              </HeatPanel>
              <Config>
                {configRows.map(([l, v]) => (
                  <React.Fragment key={l}>
                    <CLabel>{l}</CLabel>
                    <Select>{v}<Caret /></Select>
                  </React.Fragment>
                ))}
                <CLabel>Coloring Schema:</CLabel>
                <SwatchRow>
                  <SwatchLabel $w={43}>Start:</SwatchLabel>
                  <Swatch $c="#008f00" />
                  <SwatchLabel $w={36}>End:</SwatchLabel>
                  <Swatch $c="#ff0000" />
                </SwatchRow>
                <ViewBtn>View Heat Map</ViewBtn>
                <LegendTitle>Legend:</LegendTitle>
                {legend.map(([c, a, b]) => (
                  <LegendRow key={c}>
                    <LegendDot $c={c} />
                    <LegendNum>{a}</LegendNum>
                    <LegendSep>÷</LegendSep>
                    <LegendNum>{b}</LegendNum>
                  </LegendRow>
                ))}
              </Config>
            </Outline>
          </Frame>
          <ViewTabs>
            {viewRows.map((r, i) => (
              <ViewRow key={i}>
                {r.map(([t, w, on]) => <ViewTab key={t} $w={w} $on={on}>{t}</ViewTab>)}
              </ViewRow>
            ))}
          </ViewTabs>
        </RightPane>
      </Body>
      <BottomStrip><Grip $h /></BottomStrip>
    </App0>
  );
}
